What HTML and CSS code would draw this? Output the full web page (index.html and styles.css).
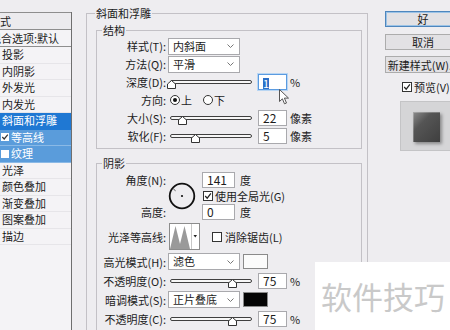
FILE: index.html
```html
<!DOCTYPE html>
<html lang="zh-CN">

<head>
    <meta charset="UTF-8">
    <title>图层样式</title>
    <link rel="stylesheet" href="styles.css">
</head>

<body>
    <div class="dialog">
        <ul class="style-list">
            <li class="list-head">样式</li>
            <li class="list-blend">混合选项:默认</li>
            <li>投影</li>
            <li>内阴影</li>
            <li>外发光</li>
            <li>内发光</li>
            <li class="active">斜面和浮雕</li>
            <li class="sub"><span class="list-check"><svg width="8" height="8" viewBox="0 0 8 8"><path d="M1.3 4 L3.2 6 L6.8 1.6" fill="none" stroke="#333" stroke-width="1.2"/></svg></span>等高线</li>
            <li class="sub"><span class="list-check"></span>纹理</li>
            <li>光泽</li>
            <li>颜色叠加</li>
            <li>渐变叠加</li>
            <li>图案叠加</li>
            <li>描边</li>
        </ul>

        <div class="settings">
            <fieldset class="group outer">
                <legend>斜面和浮雕</legend>

                <fieldset class="group inner">
                    <legend>结构</legend>
                    <div class="row">
                        <label>样式(T):</label>
                        <div class="select">内斜面<svg class="chev" width="7" height="4" viewBox="0 0 7 4"><path d="M0.5 0.5 L3.5 3.5 L6.5 0.5" fill="none" stroke="#777"/></svg></div>
                    </div>
                    <div class="row">
                        <label>方法(Q):</label>
                        <div class="select">平滑<svg class="chev" width="7" height="4" viewBox="0 0 7 4"><path d="M0.5 0.5 L3.5 3.5 L6.5 0.5" fill="none" stroke="#777"/></svg></div>
                    </div>
                    <div class="row">
                        <label>深度(D):</label>
                        <div class="slider"><span class="track"></span><svg class="thumb" style="left: -3px" width="9" height="9" viewBox="0 0 9 9"><path d="M0.5 8.5 V4 L4.5 0.5 L8.5 4 V8.5 Z" fill="#fff" stroke="#333"/></svg></div>
                        <span class="field focus"><span class="sel">1</span></span>
                        <span class="unit">%</span>
                    </div>
                    <div class="row">
                        <label>方向:</label>
                        <span class="radio on"></span><span class="radio-text">上</span>
                        <span class="radio second"></span><span class="radio-text">下</span>
                    </div>
                    <div class="row">
                        <label>大小(S):</label>
                        <div class="slider"><span class="track"></span><svg class="thumb" style="left: 8px" width="9" height="9" viewBox="0 0 9 9"><path d="M0.5 8.5 V4 L4.5 0.5 L8.5 4 V8.5 Z" fill="#fff" stroke="#333"/></svg></div>
                        <span class="field">22</span>
                        <span class="unit">像素</span>
                    </div>
                    <div class="row">
                        <label>软化(F):</label>
                        <div class="slider"><span class="track"></span><svg class="thumb" style="left: 21px" width="9" height="9" viewBox="0 0 9 9"><path d="M0.5 8.5 V4 L4.5 0.5 L8.5 4 V8.5 Z" fill="#fff" stroke="#333"/></svg></div>
                        <span class="field">5</span>
                        <span class="unit">像素</span>
                    </div>
                </fieldset>

                <fieldset class="group inner shadow">
                    <legend>阴影</legend>
                    <div class="angle">
                        <div class="angle-labels">
                            <label>角度(N):</label>
                            <label>高度:</label>
                        </div>
                        <svg class="dial" width="28" height="28" viewBox="0 0 28 28">
                            <circle cx="14" cy="14" r="12.3" fill="none" stroke="#111" stroke-width="1.8"/>
                            <circle cx="14" cy="14" r="1.1" fill="#111"/>
                            <line x1="7.6" y1="8.8" x2="5.4" y2="7" stroke="#555" stroke-width="1"/>
                        </svg>
                        <div class="angle-fields">
                            <div class="inline"><span class="field wide">141</span><span class="unit deg">度</span></div>
                            <div class="inline"><span class="check"><svg width="8" height="8" viewBox="0 0 8 8"><path d="M1.2 4 L3.2 6.2 L6.9 1.4" fill="none" stroke="#222" stroke-width="1.2"/></svg></span><span class="check-text">使用全局光(G)</span></div>
                            <div class="inline"><span class="field wide">0</span><span class="unit deg">度</span></div>
                        </div>
                    </div>

                    <div class="row contour-row">
                        <label>光泽等高线:</label>
                        <svg class="contour" width="31" height="27" viewBox="0 0 31 27">
                            <rect x="0.5" y="0.5" width="30" height="26" fill="#fff" stroke="#8c8c8c"/>
                            <path d="M1 26 L6.5 3 L11 21 L15.5 3 L21 26 Z" fill="#9a9a9a"/>
                            <line x1="22.5" y1="1" x2="22.5" y2="26" stroke="#c8c8c8"/>
                            <path d="M24.5 12 L28 12 L26.25 14.5 Z" fill="#222"/>
                        </svg>
                        <span class="check aa"></span><span class="check-text">消除锯齿(L)</span>
                    </div>

                    <div class="row mode-row first">
                        <label>高光模式(H):</label>
                        <div class="select">滤色<svg class="chev" width="7" height="4" viewBox="0 0 7 4"><path d="M0.5 0.5 L3.5 3.5 L6.5 0.5" fill="none" stroke="#777"/></svg></div>
                        <span class="swatch light"></span>
                    </div>
                    <div class="row mode-row">
                        <label>不透明度(O):</label>
                        <div class="slider"><span class="track"></span><svg class="thumb" style="left: 58px" width="9" height="9" viewBox="0 0 9 9"><path d="M0.5 8.5 V4 L4.5 0.5 L8.5 4 V8.5 Z" fill="#fff" stroke="#333"/></svg></div>
                        <span class="field">75</span>
                        <span class="unit">%</span>
                    </div>
                    <div class="row mode-row">
                        <label>暗调模式(S):</label>
                        <div class="select">正片叠底<svg class="chev" width="7" height="4" viewBox="0 0 7 4"><path d="M0.5 0.5 L3.5 3.5 L6.5 0.5" fill="none" stroke="#777"/></svg></div>
                        <span class="swatch dark"></span>
                    </div>
                    <div class="row mode-row">
                        <label>不透明度(C):</label>
                        <div class="slider"><span class="track"></span><svg class="thumb" style="left: 58px" width="9" height="9" viewBox="0 0 9 9"><path d="M0.5 8.5 V4 L4.5 0.5 L8.5 4 V8.5 Z" fill="#fff" stroke="#333"/></svg></div>
                        <span class="field">75</span>
                        <span class="unit">%</span>
                    </div>
                </fieldset>
            </fieldset>
        </div>

        <div class="side">
            <button class="btn default">好</button>
            <button class="btn">取消</button>
            <button class="btn new-style">新建样式(W)...</button>
            <div class="preview-check">
                <span class="check"><svg width="8" height="8" viewBox="0 0 8 8"><path d="M1.2 4 L3.2 6.2 L6.9 1.4" fill="none" stroke="#222" stroke-width="1.2"/></svg></span>
                <span class="check-text">预览(V)</span>
            </div>
            <div class="preview">
                <div class="preview-swatch"></div>
            </div>
        </div>
    </div>

    <!-- mouse pointer over the depth field -->
    <svg class="cursor" width="11" height="16" viewBox="0 0 11 16">
        <path d="M0.5 0.5 L0.5 12.5 L3.4 9.8 L5.5 14.8 L7.5 14 L5.4 9.1 L9.5 9.1 Z" fill="#fff" stroke="#555" stroke-width="1"/>
    </svg>

    <div class="watermark">软件技巧</div>
</body>

</html>
```

FILE: styles.css
```css
* {
    box-sizing: border-box;
}

body {
    margin: 0;
    width: 450px;
    height: 330px;
    overflow: hidden;
    position: relative;
    background: #eeedf0;
    color: #1c1c1c;
    font-family: "Noto Sans CJK SC", "Noto Sans", sans-serif;
    font-size: 11px;
    line-height: 14px;
}

.dialog {
    display: flex;
    height: 330px;
    overflow: hidden;
}

/* ---- left list of effects ---- */

.style-list {
    list-style: none;
    margin: 12px 0 0;
    padding: 0;
    width: 72px;
    flex-shrink: 0;
    background: #f4f3f6;
    border-right: 1px solid #6f6f6f;
    overflow: hidden;
}

.style-list li {
    height: 16.5px;
    line-height: 15px;
    padding-left: 2px;
    border-bottom: 1px solid #e6e5e9;
    white-space: nowrap;
    display: flex;
    align-items: center;
}

.style-list .list-head {
    height: 18px;
    border-top: 1px solid #8e8e8e;
    border-bottom: 1px solid #8e8e8e;
    background: #ecebee;
    display: block;
    line-height: 16px;
    text-indent: -13px;
}

.style-list .list-blend {
    height: 17px;
    border-bottom: 1px solid #8e8e8e;
    display: block;
    line-height: 16px;
    text-indent: -12px;
}

.style-list .active {
    background: #1f78d3;
    color: #fff;
    border-bottom-color: #1f78d3;
}

.style-list .sub {
    background: #5a9cdb;
    color: #fff;
    padding-left: 1px;
    border-bottom-color: #8ab9e6;
}

.list-check {
    width: 8px;
    height: 8px;
    background: #fff;
    margin-right: 2px;
    display: inline-flex;
}

/* ---- group boxes ---- */

.settings {
    width: 296px;
    height: 330px;
    flex-shrink: 0;
    padding: 6px 0 0 14px;
    overflow: hidden;
}

.group {
    margin: 0;
    border: 1px solid #c3c1c6;
    min-width: 0;
}

.group legend {
    line-height: 14px;
    padding: 0 1px;
}

.outer {
    width: 282px;
    height: 334px;
    padding: 3px 5px 0 9px;
}

.outer > legend {
    margin-left: -1px;
}

.inner {
    padding: 0 0 3px 0;
}

.inner > legend {
    margin-left: 5px;
}

.shadow {
    margin-top: 7px;
    padding-top: 2px;
    height: 190px;
}

/* ---- rows ---- */

.row {
    display: flex;
    align-items: center;
    height: 18px;
    white-space: nowrap;
}

.row label,
.angle-labels label {
    width: 69px;
    flex-shrink: 0;
    text-align: right;
}

.select {
    margin-left: 2px;
    width: 72px;
    height: 17px;
    background: #fff;
    border: 1px solid #a9a9ad;
    padding-left: 4px;
    line-height: 15px;
    display: flex;
    align-items: center;
    justify-content: space-between;
    padding-right: 5px;
}

.slider {
    margin-left: 4px;
    width: 82px;
    height: 18px;
    position: relative;
    flex-shrink: 0;
}

.track {
    position: absolute;
    left: 0;
    right: 0;
    top: 7px;
    height: 4px;
    border: 1px solid #3f3f3f;
    border-radius: 2px;
    background: #f7f7f7;
}

.thumb {
    position: absolute;
    top: 7px;
}

.field {
    margin-left: 6px;
    width: 29px;
    height: 16px;
    background: #fff;
    border: 1px solid #a9a9ad;
    padding-left: 4px;
    font-size: 12px;
    line-height: 14px;
    flex-shrink: 0;
}

.field.focus {
    border-color: #5b9be0;
    box-shadow: 0 0 0 1px #b9d6f3;
    padding-top: 1px;
}

.sel {
    display: inline-block;
    background: #2c6fc7;
    color: #fff;
    width: 6px;
    height: 11px;
    line-height: 11px;
    font-size: 11px;
    text-align: center;
}

.unit {
    margin-left: 3px;
}

.radio {
    width: 10px;
    height: 10px;
    border: 1px solid #333;
    border-radius: 50%;
    background: #fff;
    display: inline-flex;
    align-items: center;
    justify-content: center;
    margin-left: 4px;
}

.radio.on::after {
    content: "";
    width: 4px;
    height: 4px;
    border-radius: 50%;
    background: #111;
}

.radio.second {
    margin-left: 11px;
}

.radio-text {
    margin-left: 1px;
}

.check {
    width: 10px;
    height: 10px;
    border: 1px solid #333;
    background: #fff;
    display: inline-flex;
    align-items: center;
    justify-content: center;
    flex-shrink: 0;
}

.check-text {
    margin-left: 2px;
}

/* ---- angle block ---- */

.angle {
    display: flex;
    height: 48px;
}

.angle-labels {
    display: flex;
    flex-direction: column;
    justify-content: space-between;
    line-height: 16px;
}

.dial {
    margin-left: 2px;
    align-self: center;
}

.angle-fields {
    margin-left: 6px;
    display: flex;
    flex-direction: column;
}

.inline {
    display: flex;
    align-items: center;
    height: 16px;
    white-space: nowrap;
}

.field.wide {
    margin-left: 0;
    width: 33px;
}

.unit.deg {
    margin-left: 5px;
}

.inline .check {
    margin-left: 1px;
}

.contour-row {
    margin-top: 3px;
    height: 27px;
}

.contour {
    margin-left: 3px;
}

.check.aa {
    margin-left: 12px;
}

.check.aa + .check-text {
    margin-left: 3px;
}

.mode-row {
    height: 19px;
}

.mode-row.first {
    margin-top: 2px;
}

.swatch {
    margin-left: 3px;
    width: 25px;
    height: 15px;
    border: 1px solid #8a8a8a;
}

.swatch.light {
    background: #fbfbfb;
}

.swatch.dark {
    background: #050505;
}

/* ---- right side ---- */

.side {
    width: 82px;
    flex-shrink: 0;
    padding: 11px 0 0 17px;
}

.btn {
    display: block;
    width: 76px;
    height: 16px;
    padding: 0;
    margin-bottom: 7px;
    font-family: inherit;
    font-size: 11px;
    line-height: 14px;
    color: #1c1c1c;
    background: #e2e1e4;
    border: 1px solid #acacac;
    white-space: nowrap;
    overflow: hidden;
}

.btn.default {
    border-color: #4e86bd;
    box-shadow: inset 0 0 0 1px #9cc3e6;
}

.btn.new-style {
    margin-top: -1px;
    height: 17px;
}

.preview-check {
    display: flex;
    align-items: center;
    height: 14px;
    margin: 4px 0 0 17px;
    white-space: nowrap;
}

.preview {
    margin: 7px 0 0 15px;
    width: 52px;
    height: 50px;
    background: #d5d5d7;
    border: 1px solid #c4c4c6;
    padding: 10px 0 0 12px;
}

.preview-swatch {
    width: 27px;
    height: 30px;
    background: linear-gradient(135deg, #8c8c8c 0%, #555 35%, #3f3f3f 100%);
    box-shadow: 2px 2px 3px rgba(0, 0, 0, 0.35), inset 1px 1px 0 rgba(255, 255, 255, 0.25);
}

/* ---- overlays ---- */

.cursor {
    position: absolute;
    left: 279px;
    top: 89px;
}

.watermark {
    position: absolute;
    left: 315px;
    top: 262px;
    width: 135px;
    height: 68px;
    background: #fff;
    color: #c9c9c9;
    font-size: 31px;
    line-height: 30px;
    padding: 19px 0 0 6px;
    white-space: nowrap;
}
```
